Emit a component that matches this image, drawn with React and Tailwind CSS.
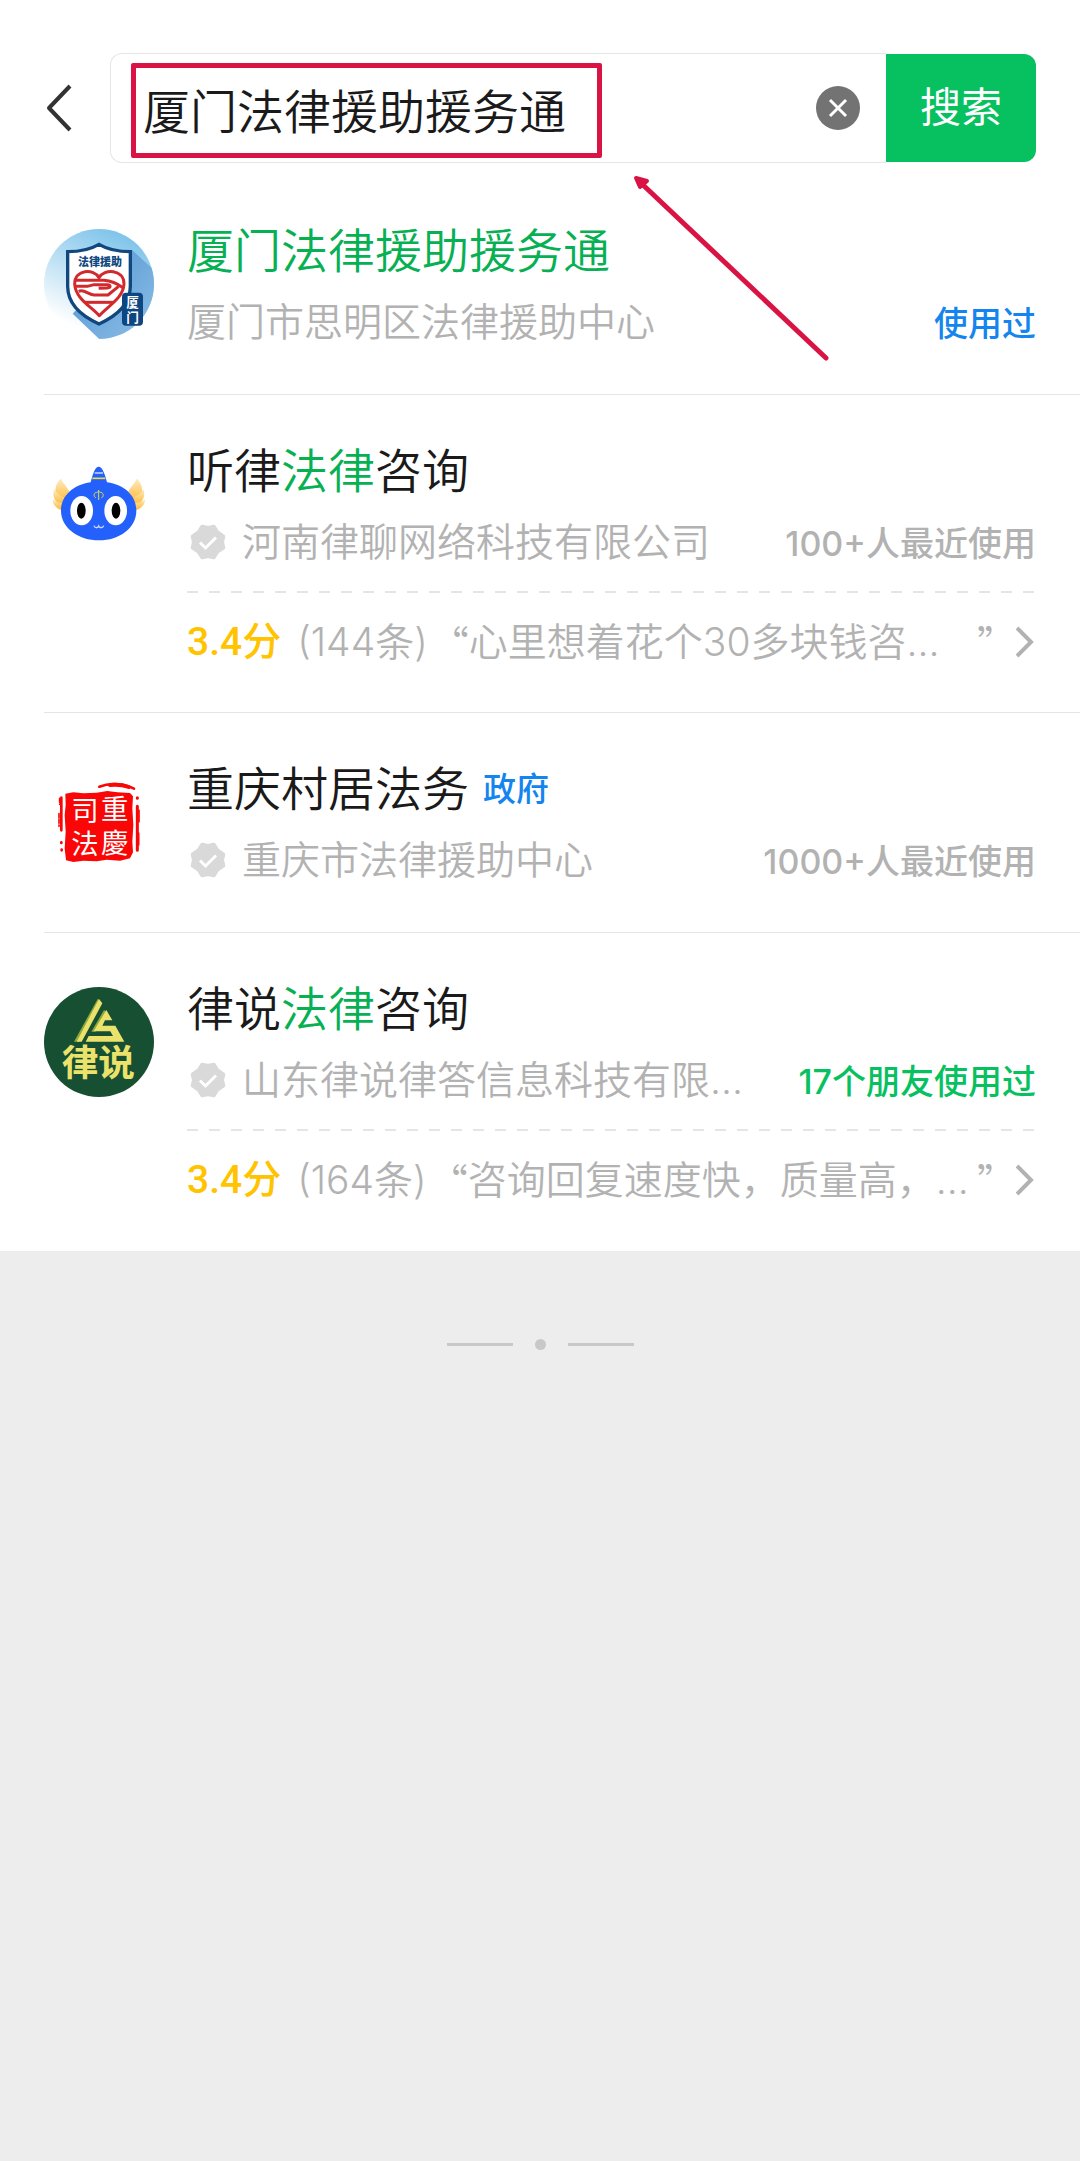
import React, { useState } from "react";

function ShieldLogo() {
  return (
    <svg viewBox="42 42 330 330" className="w-full h-full" aria-hidden="true">
      <defs>
        <linearGradient id="shieldSky" x1="0.6" y1="0" x2="0.2" y2="0.85">
          <stop offset="0" stopColor="#7fc4ea" />
          <stop offset="1" stopColor="#ffffff" />
        </linearGradient>
        <linearGradient id="shieldShadow" x1="0" y1="0" x2="1" y2="1">
          <stop offset="0" stopColor="#4f93cf" />
          <stop offset="1" stopColor="#8fc0e8" />
        </linearGradient>
        <clipPath id="shieldClip">
          <circle cx="207" cy="207" r="165" />
        </clipPath>
      </defs>
      <g clipPath="url(#shieldClip)">
        <rect x="42" y="42" width="330" height="330" fill="url(#shieldSky)" />
        <path d="M305 104L380 172V380H216L128 296Z" fill="url(#shieldShadow)" />
      </g>
      <path
        d="M207 88C180 104 146 110 113 110V214C113 268 156 304 207 327C258 304 301 268 301 214V110C268 110 234 104 207 88Z"
        fill="#fff"
        stroke="#11477f"
        strokeWidth="10"
      />
      <text
        x="210"
        y="153"
        textAnchor="middle"
        fontSize="33"
        fontWeight="900"
        fill="#11477f"
        fontFamily="'Noto Sans CJK SC', sans-serif"
      >
        法律援助
      </text>
      <g fill="none" stroke="#d22a2c" strokeWidth="9" strokeLinejoin="round">
        <path d="M207 188C192 160 134 162 134 207C136 250 182 274 208 302C232 274 280 250 282 207C282 162 222 160 207 188Z" />
        <path d="M138 196H222C244 198 262 206 279 218" />
        <path d="M134 214H172L192 209H232C243 210 243 218 232 219L206 220" />
        <path d="M146 229C164 222 172 238 192 240H234L266 214" />
        <path d="M164 262H252" />
      </g>
      <rect x="276" y="233" width="63" height="99" rx="12" fill="#0d4680" />
      <g
        fill="#fff"
        fontSize="38"
        fontWeight="700"
        textAnchor="middle"
        fontFamily="'Noto Sans CJK SC', sans-serif"
      >
        <text x="308" y="275">
          厦
        </text>
        <text x="308" y="321">
          门
        </text>
      </g>
    </svg>
  );
}

function RobotLogo() {
  return (
    <svg viewBox="42 -3 330 330" className="w-full h-full" aria-hidden="true">
      <defs>
        <linearGradient id="wing" x1="0" y1="0" x2="0" y2="1">
          <stop offset="0" stopColor="#fdebc4" />
          <stop offset="1" stopColor="#ffb62c" />
        </linearGradient>
      </defs>
      <g fill="url(#wing)">
        <path d="M93 86C100 102 112 112 118 124L98 160L80 140C72 118 78 98 93 86Z" />
        <path d="M72 118C82 134 96 138 104 144L96 166C76 160 66 142 72 118Z" />
        <path d="M68 148C78 158 90 158 98 160L95 180C78 176 68 164 68 148Z" />
      </g>
      <g transform="matrix(-1 0 0 1 413 0)" fill="url(#wing)">
        <path d="M93 86C100 102 112 112 118 124L98 160L80 140C72 118 78 98 93 86Z" />
        <path d="M72 118C82 134 96 138 104 144L96 166C76 160 66 142 72 118Z" />
        <path d="M68 148C78 158 90 158 98 160L95 180C78 176 68 164 68 148Z" />
      </g>
      <path
        d="M206 50C196 50 190 66 182 97C130 104 93 138 93 182C93 234 146 271 207 271C268 271 319 234 319 182C319 138 284 104 231 97C223 66 216 50 206 50Z"
        fill="#2460fb"
      />
      <path d="M194 69H219" stroke="#b9ccff" strokeWidth="5" />
      <path d="M187 85H226" stroke="#f3dc35" strokeWidth="5" />
      <ellipse cx="155" cy="182" rx="34" ry="44" fill="#fff" />
      <ellipse cx="257" cy="182" rx="34" ry="44" fill="#fff" />
      <ellipse cx="154" cy="182" rx="13" ry="24" fill="#000" />
      <ellipse cx="258" cy="182" rx="13" ry="24" fill="#000" />
      <path
        d="M206 120V150M196 128C202 128 204 124 206 124C208 124 210 128 216 128M196 128C190 134 192 142 198 143M216 128C222 134 220 142 214 143"
        fill="none"
        stroke="#dfd944"
        strokeWidth="3"
      />
      <path
        d="M192 227C194 235 203 235 206 228C209 235 219 235 221 227"
        fill="none"
        stroke="#cfdcff"
        strokeWidth="4"
      />
    </svg>
  );
}

function SealLogo() {
  return (
    <svg viewBox="42 6 330 330" className="w-full h-full" aria-hidden="true">
      <path
        d="M106 86L130 82L160 85L200 83L232 78L262 82L300 84L309 94L307 130L310 180L307 230L309 262L300 280L270 287L230 284L200 289L160 287L130 291L108 286L104 250L107 200L104 150L107 120Z"
        fill="#fb0606"
      />
      <g fill="none" stroke="#fb0606" strokeLinecap="round">
        <path d="M208 65C236 54 276 54 312 71" strokeWidth="8" />
        <path d="M240 60C262 58 280 60 296 66" strokeWidth="12" />
        <path d="M94 98V196M94 232V234M95 254V256" strokeWidth="8" />
        <path
          d="M89 100V118M87 146V184"
          strokeWidth="5"
          strokeDasharray="12 5"
        />
        <path d="M322 98V100M322 124V256" strokeWidth="9" />
        <path d="M327 136V170M326 204V240" strokeWidth="5" />
      </g>
      <g
        fill="#fff"
        fontSize="82"
        textAnchor="middle"
        fontFamily="'Noto Sans CJK SC', sans-serif"
      >
        <text x="165" y="168">
          司
        </text>
        <text x="165" y="268">
          法
        </text>
        <text x="254" y="162">
          重
        </text>
        <text x="254" y="264">
          慶
        </text>
      </g>
    </svg>
  );
}

function LvshuoLogo() {
  return (
    <svg viewBox="42 52 330 330" className="w-full h-full" aria-hidden="true">
      <circle cx="207" cy="217" r="165" fill="#174f33" />
      <g fill="#8cab3c">
        <path d="M203 88L210 92L147 216H132Z" />
        <path d="M222 121L230 126L196 186H184Z" />
      </g>
      <g fill="#ebe26b">
        <path d="M207 88L217 101L155 216H140Z" />
        <path d="M229 121L247 152H225L217 168H256L283 216H167L176 199H249L241 185H191Z" />
      </g>
      <text
        x="205"
        y="318"
        textAnchor="middle"
        fontSize="110"
        fontWeight="700"
        fill="#ebe26b"
        fontFamily="'Noto Sans CJK SC', sans-serif"
      >
        律说
      </text>
    </svg>
  );
}

function VerifiedIcon() {
  return (
    <svg viewBox="0 0 36 36" className="w-9 h-9 shrink-0" aria-hidden="true">
      <path
        d="M18 4L23.7 2.7L27.5 8.5L33.3 12.3L32 18L33.3 23.7L27.5 27.5L23.7 33.3L18 32L12.3 33.3L8.5 27.5L2.7 23.7L4 18L2.7 12.3L8.5 8.5L12.3 2.7Z"
        fill="#d9d9d9"
        stroke="#d9d9d9"
        strokeWidth="4"
        strokeLinejoin="round"
      />
      <path
        d="M10 18.5L15.5 24L26 13.5"
        fill="none"
        stroke="#fff"
        strokeWidth="3"
      />
    </svg>
  );
}

const results = [
  {
    id: 1,
    logo: ShieldLogo,
    title: [{ text: "厦门法律援助援务通", hit: true }],
    company: "厦门市思明区法律援助中心",
    usage: "使用过",
    usageColor: "text-[#1485ee]",
  },
  {
    id: 2,
    logo: RobotLogo,
    title: [
      { text: "听律" },
      { text: "法律", hit: true },
      { text: "咨询" },
    ],
    verified: true,
    company: "河南律聊网络科技有限公司",
    usage: "100+人最近使用",
    usageColor: "text-[#b2b2b2]",
    review: { score: "3.4分", count: "(144条)", text: "心里想着花个30多块钱咨..." },
  },
  {
    id: 3,
    logo: SealLogo,
    title: [{ text: "重庆村居法务" }],
    tag: "政府",
    verified: true,
    company: "重庆市法律援助中心",
    usage: "1000+人最近使用",
    usageColor: "text-[#b2b2b2]",
  },
  {
    id: 4,
    logo: LvshuoLogo,
    title: [
      { text: "律说" },
      { text: "法律", hit: true },
      { text: "咨询" },
    ],
    verified: true,
    company: "山东律说律答信息科技有限...",
    usage: "17个朋友使用过",
    usageColor: "text-[#07c160]",
    review: { score: "3.4分", count: "(164条)", text: "咨询回复速度快，质量高，..." },
  },
];

function Review({ review }) {
  return (
    <>
      <div className="mt-[22px] h-[2px] bg-[repeating-linear-gradient(90deg,#e5e5e5_0_11px,transparent_11px_22px)]"></div>
      <a
        href="#reviews"
        className="mt-[22px] -mb-[2px] flex items-center text-[39px] leading-[54px] font-[350] text-[#b2b2b2] whitespace-nowrap"
      >
        <span className="font-['Roboto','Noto_Sans_CJK_SC',sans-serif] font-medium text-[#ffc300]">
          {review.score}
        </span>
        <span className="ml-4">{review.count}</span>
        <span className="ml-[2px] font-['Noto_Sans_CJK_SC',sans-serif]">“</span>
        <span className="flex-1 min-w-0">{review.text}</span>
        <span className="font-['Noto_Sans_CJK_SC',sans-serif]">”</span>
        <svg
          className="w-5 h-8 shrink-0"
          viewBox="0 0 20 32"
          fill="none"
          stroke="currentColor"
          strokeWidth="4"
          aria-hidden="true"
        >
          <path d="M1 2L15 16L1 30" />
        </svg>
      </a>
    </>
  );
}

function ResultItem({ item }) {
  const Logo = item.logo;

  return (
    <li className="ml-11 pr-11 pt-11 pb-[45px] flex gap-[33px] border-b border-[#e5e5e5] last:border-white">
      <div className="w-[110px] h-[110px] mt-[10px] shrink-0">
        <Logo />
      </div>
      <div className="flex-1 min-w-0">
        <div className="flex items-center gap-[14px]">
          <h2 className="text-[47px] leading-[64px] font-[350] text-[#1a1a1a]">
            {item.title.map((part) => (
              <span
                key={part.text}
                className={part.hit ? "text-[#07b053]" : ""}
              >
                {part.text}
              </span>
            ))}
          </h2>
          {item.tag && (
            <span className="text-[33px] leading-[64px] font-medium text-[#1485ee]">
              {item.tag}
            </span>
          )}
        </div>
        <div className="mt-3 flex items-center whitespace-nowrap">
          {item.verified && (
            <span className="ml-[3px] mr-4">
              <VerifiedIcon />
            </span>
          )}
          <p className="flex-1 min-w-0 text-[39px] leading-[54px] font-[350] text-[#b2b2b2]">
            {item.company}
          </p>
          <span
            className={`pt-1 text-[34px] leading-[50px] font-medium ${item.usageColor}`}
          >
            {item.usage}
          </span>
        </div>
        {item.review && <Review review={item.review} />}
      </div>
    </li>
  );
}

export default function App() {
  const [query, setQuery] = useState("厦门法律援助援务通");

  return (
    <div className="min-h-screen bg-[#ededed] font-['Inter','Noto_Sans_CJK_SC',sans-serif]">
      <div className="bg-white">
        <header className="relative flex items-center pt-[53px] pb-3 pr-11">
          <button type="button" aria-label="返回" className="w-[110px] pl-11">
            <svg
              className="w-7 h-12"
              viewBox="0 0 28 48"
              fill="none"
              stroke="#333"
              strokeWidth="4"
              strokeLinejoin="round"
            >
              <path d="M26 2L5 24L26 46" />
            </svg>
          </button>

          <form
            className="flex-1 min-w-0 flex h-[110px]"
            onSubmit={(e) => e.preventDefault()}
          >
            <div className="relative flex-1 min-w-0 flex items-center border border-r-0 border-[#e5e5e5] rounded-l-xl pl-8 pr-[26px]">
              <input
                type="text"
                aria-label="搜索"
                value={query}
                onChange={(e) => setQuery(e.target.value)}
                className="flex-1 min-w-0 h-full text-[47px] font-[350] text-[#1a1a1a] bg-transparent outline-none"
              />
              <button
                type="button"
                aria-label="清除"
                onClick={() => setQuery("")}
                className="w-11 h-11 rounded-full bg-[#737373] flex items-center justify-center"
              >
                <svg
                  className="w-5 h-5"
                  viewBox="0 0 20 20"
                  stroke="#fff"
                  strokeWidth="3"
                >
                  <path d="M2 2L18 18M18 2L2 18" />
                </svg>
              </button>

              {/* Highlight frame over the query */}
              <div className="absolute left-5 top-[9px] w-[471px] h-[95px] border-5 border-[#d91444] rounded-xs pointer-events-none"></div>
            </div>
            <button
              type="submit"
              className="w-[150px] my-px bg-[#07c160] text-white text-[41px] rounded-r-xl"
            >
              搜索
            </button>
          </form>

          {/* Arrow pointing at the query */}
          <svg
            className="absolute left-[630px] top-[172px] w-[202px] h-[194px] pointer-events-none"
            viewBox="0 0 202 194"
            aria-hidden="true"
          >
            <path
              d="M12 12L196 186"
              stroke="#d91444"
              strokeWidth="5"
              strokeLinecap="round"
            />
            <path
              d="M6 6L17 9L10 15Z"
              fill="#d91444"
              stroke="#d91444"
              strokeWidth="4"
              strokeLinejoin="round"
            />
          </svg>
        </header>

        <ul>
          {results.map((item) => (
            <ResultItem key={item.id} item={item} />
          ))}
        </ul>
      </div>

      <div className="pt-[88px] flex items-center justify-center gap-[22px]">
        <span className="w-[66px] h-[3px] bg-[#c8c8c8]"></span>
        <span className="w-[11px] h-[11px] rounded-full bg-[#c8c8c8]"></span>
        <span className="w-[66px] h-[3px] bg-[#c8c8c8]"></span>
      </div>
    </div>
  );
}
